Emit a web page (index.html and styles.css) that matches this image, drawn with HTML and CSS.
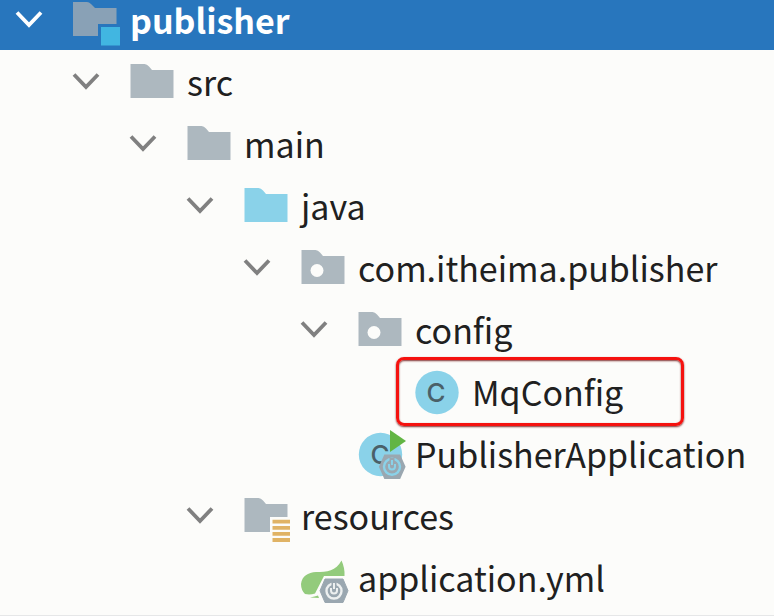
FILE: index.html
```html
<!DOCTYPE html>
<html lang="en">
<head>
<meta charset="utf-8">
<title>Project</title>
<link rel="stylesheet" href="styles.css">
</head>
<body>
<svg class="defs" aria-hidden="true">
  <symbol id="chevron" viewBox="0 0 30 48"><path d="M3 14.500L15 27L27 14.500" fill="none" stroke="currentColor" stroke-width="3.800"/></symbol>
  <symbol id="folder" viewBox="0 0 48 48"><path d="M1.500 4H15.500Q18 4 20 6.500L23 10H44.500V38H1.500Z" fill="currentColor"/></symbol>
  <symbol id="package" viewBox="0 0 48 48"><path d="M1.500 4H15.500Q18 4 20 6.500L23 10H44.500V38H1.500Z" fill="currentColor"/><circle cx="17" cy="24.500" r="6.500" fill="#fcfcfa"/></symbol>
  <symbol id="notched" viewBox="0 0 48 48"><path d="M1.500 4H15.500Q18 4 20 6.500L23 10H44.500V23H27V38H1.500Z" fill="currentColor"/></symbol>
</svg>
<nav aria-label="Project files">
  <ul class="tree">
    <li>
      <div class="row selected">
        <button class="toggle" aria-label="Toggle publisher"><svg><use href="#chevron"/></svg></button>
        <svg class="icon module" viewBox="0 0 48 48"><path d="M1 4H15Q17 4 19 6L23 10H44.500V26H26V38H1Z" fill="currentColor"/><path d="M29 29H48V47.500H29Z" fill="#41b6e1"/></svg>
        <span>publisher</span>
      </div>
      <ul>
        <li>
          <div class="row">
            <button class="toggle" aria-label="Toggle src"><svg><use href="#chevron"/></svg></button>
            <svg class="icon"><use href="#folder"/></svg>
            <span>src</span>
          </div>
          <ul>
            <li>
              <div class="row">
                <button class="toggle" aria-label="Toggle main"><svg><use href="#chevron"/></svg></button>
                <svg class="icon"><use href="#folder"/></svg>
                <span>main</span>
              </div>
              <ul>
                <li>
                  <div class="row">
                    <button class="toggle" aria-label="Toggle java"><svg><use href="#chevron"/></svg></button>
                    <svg class="icon source"><use href="#folder"/></svg>
                    <span>java</span>
                  </div>
                  <ul>
                    <li>
                      <div class="row">
                        <button class="toggle" aria-label="Toggle com.itheima.publisher"><svg><use href="#chevron"/></svg></button>
                        <svg class="icon"><use href="#package"/></svg>
                        <span>com.itheima.publisher</span>
                      </div>
                      <ul>
                        <li>
                          <div class="row">
                            <button class="toggle" aria-label="Toggle config"><svg><use href="#chevron"/></svg></button>
                            <svg class="icon"><use href="#package"/></svg>
                            <span>config</span>
                          </div>
                          <ul>
                            <li>
                              <div class="row marked">
                                <svg class="icon" viewBox="0 0 48 48"><circle cx="23" cy="22.500" r="21.700" fill="#8ad2e9"/><text class="letter" x="22" y="32" text-anchor="middle">C</text></svg>
                                <span>MqConfig</span>
                              </div>
                            </li>
                          </ul>
                        </li>
                        <li>
                          <div class="row">
                            <svg class="icon" viewBox="0 0 48 48">
                              <circle cx="23.500" cy="22.500" r="21.700" fill="#8ad2e9"/>
                              <text class="letter" x="23" y="32" text-anchor="middle">C</text>
                              <path d="M33-2L49 9L33 20Z" fill="#62b543"/>
                              <path d="M28 23.500H42.500L47.500 34.700L42.500 46H28L23 34.700Z" fill="#9aa7b0" stroke="#9aa7b0" stroke-width="2"/>
                              <circle cx="35" cy="34.700" r="8" fill="none" stroke="#8ad2e9" stroke-width="2.400"/>
                              <path d="M35 26V32" stroke="#9aa7b0" stroke-width="5"/>
                              <path d="M32 32V34.500A3 3 0 0 0 38 34.500V32M35 28V33" fill="none" stroke="#8ad2e9" stroke-width="2"/>
                            </svg>
                            <span>PublisherApplication</span>
                          </div>
                        </li>
                      </ul>
                    </li>
                  </ul>
                </li>
                <li>
                  <div class="row">
                    <button class="toggle" aria-label="Toggle resources"><svg><use href="#chevron"/></svg></button>
                    <svg class="icon" viewBox="0 0 48 48"><use href="#notched"/><path d="M29.500 27.700H47M29.500 33.800H47M29.500 39.900H47M29.500 46H47" stroke="#e0b365" stroke-width="3.800"/></svg>
                    <span>resources</span>
                  </div>
                  <ul>
                    <li>
                      <div class="row">
                        <svg class="icon" viewBox="0 0 48 48">
                          <path d="M41.500 4.500Q45 12 44.500 20H24L15 37.500Q10 39 5 38Q1 34 1 28C2 20 8 16.500 16 16C27 16 36 15 41.500 4.500Z" fill="#93cb7c"/>
                          <path d="M10 41.500Q15 40.500 18 39.500L19 42Z" fill="#93cb7c"/>
                          <path d="M25 23H43L48 34.700L43 46.500H25L20 34.700Z" fill="#9aa7b0" stroke="#9aa7b0"/>
                          <circle cx="34" cy="35" r="7.500" fill="none" stroke="#edf0f0" stroke-width="2.400"/>
                          <path d="M34 25V32" stroke="#9aa7b0" stroke-width="5"/>
                          <path d="M31 32V34.500A3 3 0 0 0 37 34.500V32M34 27V33" fill="none" stroke="#edf0f0" stroke-width="2"/>
                        </svg>
                        <span>application.yml</span>
                      </div>
                    </li>
                  </ul>
                </li>
              </ul>
            </li>
          </ul>
        </li>
      </ul>
    </li>
  </ul>
</nav>
</body>
</html>
```
FILE: styles.css
```css
body {
  margin: 0;
  background: #fcfcfa;
  color: #202020;
  font-family: "Noto Sans CJK SC", "Noto Sans", sans-serif;
  font-size: 34px;
  line-height: 40px;
}

.defs {
  position: absolute;
  width: 0;
  height: 0;
}

.tree {
  border-bottom: 1px solid #e6e7e8;
  padding-bottom: 4px;
}

ul {
  margin: 0;
  padding: 0;
  list-style: none;
}

ul ul ul {
  padding-left: 57px;
}

.tree > li > ul {
  padding: 3px 0 0 57px;
}

.row {
  display: grid;
  grid-template-columns: 58px 48px auto;
  align-items: center;
  justify-content: start;
  box-sizing: border-box;
  height: 62px;
  padding-left: 14px;
  white-space: nowrap;
}

.row span {
  grid-column: 3;
  padding: 0 0 4px 10px;
}

.selected {
  grid-template-rows: 44px;
  height: 50px;
  padding-bottom: 6px;
  background: #2876bd;
  color: #ffffff;
  font-weight: 700;
}

.toggle {
  width: 30px;
  height: 48px;
  padding: 0;
  border: 0;
  background: none;
  color: #808080;
}

.selected .toggle {
  color: #ffffff;
}

.toggle svg {
  display: block;
  width: 30px;
  height: 48px;
}

.icon {
  grid-column: 2;
  width: 48px;
  height: 48px;
  overflow: visible;
  color: #adb8bf;
}

.module {
  color: #89a1b6;
}

.source {
  color: #8ad2e9;
}

.letter {
  fill: #4a6068;
  font: 500 26px/1 Inter, sans-serif;
}

.marked {
  position: relative;
}

.marked::after {
  content: "";
  position: absolute;
  top: -6px;
  left: 54px;
  box-sizing: border-box;
  width: 288px;
  height: 69px;
  border: 3px solid #f5120f;
  border-radius: 8px;
  box-shadow: 0 1px 2px #803030, inset 0 1px 2px #803030;
}
```
